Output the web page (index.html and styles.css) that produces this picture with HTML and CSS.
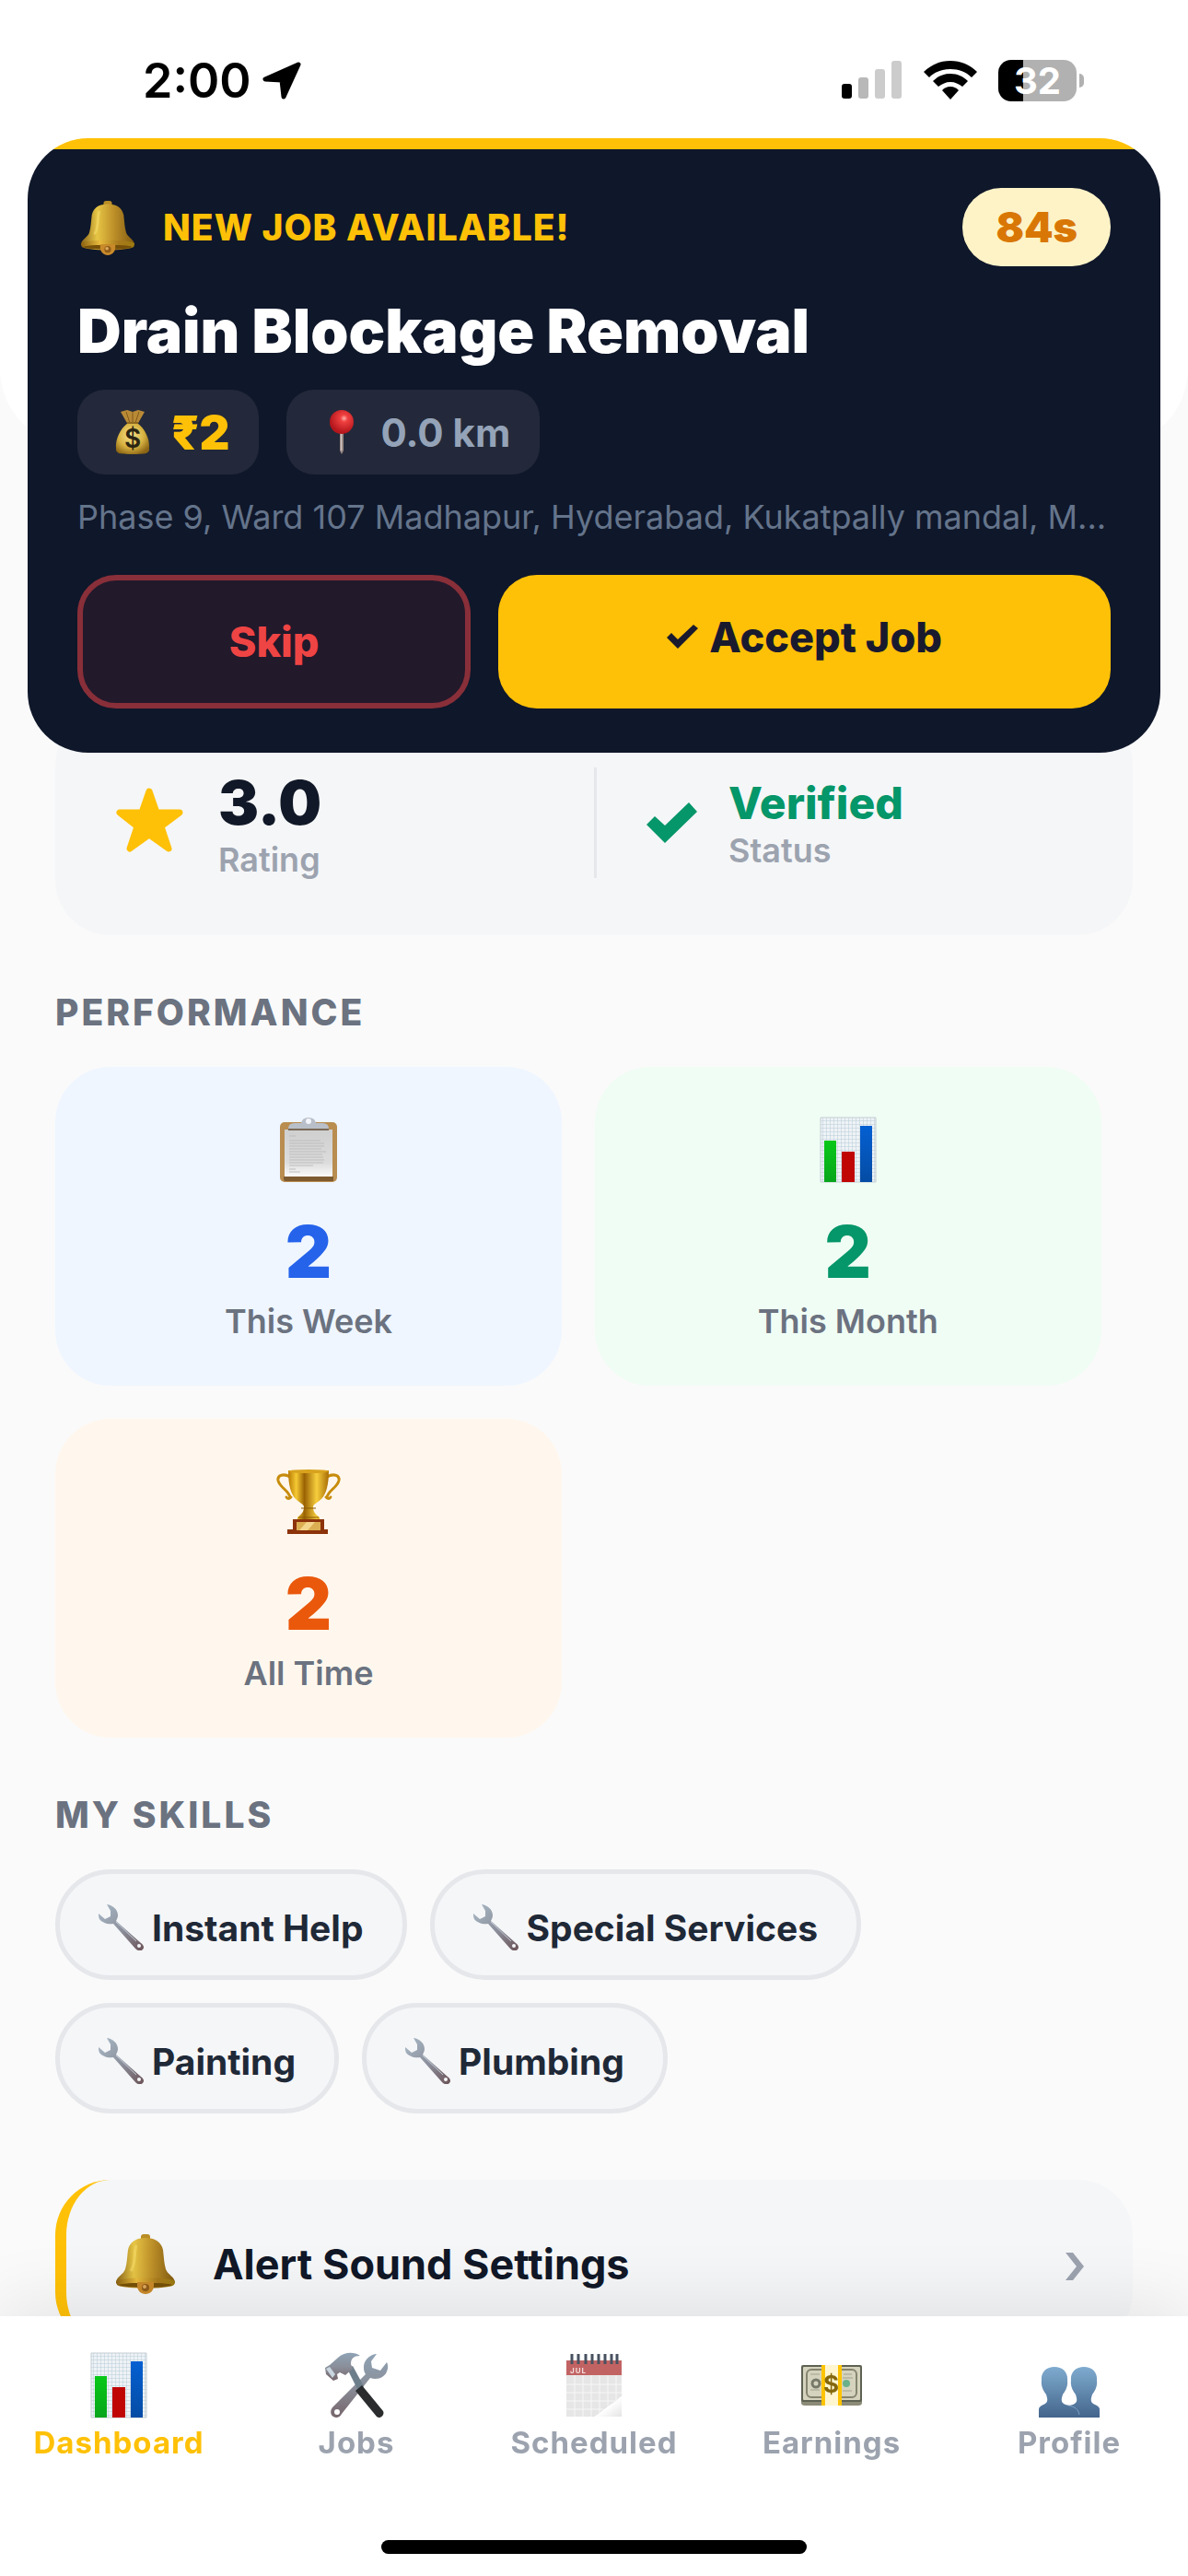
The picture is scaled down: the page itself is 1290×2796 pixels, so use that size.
FILE: index.html
```html
<!DOCTYPE html>
<html lang="en">
<head>
    <meta charset="UTF-8">
    <meta name="viewport" content="width=device-width, initial-scale=1.0">
    <title>Dashboard</title>
    <link rel="stylesheet" href="styles.css">
</head>
<body>
    <!-- Shared icons -->
    <svg class="sprite" aria-hidden="true">
        <defs>
            <linearGradient id="gold" x1="0" x2="1" y1="0" y2="0">
                <stop offset="0" stop-color="#8a6418"/>
                <stop offset=".3" stop-color="#e6c545"/>
                <stop offset=".6" stop-color="#c0922a"/>
                <stop offset="1" stop-color="#80590f"/>
            </linearGradient>
            <linearGradient id="rim" x1="0" x2="1" y1="0" y2="0">
                <stop offset="0" stop-color="#8a6010"/>
                <stop offset=".35" stop-color="#e8bb3d"/>
                <stop offset=".7" stop-color="#a87a1c"/>
                <stop offset="1" stop-color="#9c7a10"/>
            </linearGradient>
            <linearGradient id="cup" x1="0" x2="1" y1="0" y2="0">
                <stop offset="0" stop-color="#b87a04"/>
                <stop offset=".2" stop-color="#f5c933"/>
                <stop offset=".4" stop-color="#9a6203"/>
                <stop offset=".7" stop-color="#f7cf3d"/>
                <stop offset="1" stop-color="#a86c05"/>
            </linearGradient>
            <linearGradient id="steel" x1="0" x2="1" y1="0" y2="1">
                <stop offset="0" stop-color="#a9bac8"/>
                <stop offset=".55" stop-color="#8b8e9a"/>
                <stop offset="1" stop-color="#6b5357"/>
            </linearGradient>
            <linearGradient id="metal" x1="0" x2="0" y1="0" y2="1">
                <stop offset="0" stop-color="#8fa3b5"/>
                <stop offset=".5" stop-color="#8a8f9a"/>
                <stop offset="1" stop-color="#76656b"/>
            </linearGradient>
            <linearGradient id="green" x1="0" x2="0" y1="0" y2="1">
                <stop offset="0" stop-color="#08c818"/>
                <stop offset="1" stop-color="#08a51c"/>
            </linearGradient>
            <linearGradient id="blue" x1="0" x2="0" y1="0" y2="1">
                <stop offset="0" stop-color="#0560d2"/>
                <stop offset="1" stop-color="#044ca4"/>
            </linearGradient>
            <linearGradient id="people" x1="0" x2="0" y1="0" y2="1">
                <stop offset="0" stop-color="#7fabcf"/>
                <stop offset="1" stop-color="#44658c"/>
            </linearGradient>
            <linearGradient id="paper" x1="0" x2="0" y1="0" y2="1">
                <stop offset="0" stop-color="#cfcfcf"/>
                <stop offset=".7" stop-color="#dcdcdc"/>
                <stop offset="1" stop-color="#fafafa"/>
            </linearGradient>
            <linearGradient id="curl" x1="0" x2="1" y1="0" y2="1">
                <stop offset="0" stop-color="#666"/>
                <stop offset=".45" stop-color="#999"/>
                <stop offset=".55" stop-color="#fff"/>
                <stop offset="1" stop-color="#e4e4e4"/>
            </linearGradient>
            <radialGradient id="sack" cx=".45" cy=".4" r=".65">
                <stop offset="0" stop-color="#f8e48c"/>
                <stop offset=".6" stop-color="#d6b03f"/>
                <stop offset="1" stop-color="#8c6615"/>
            </radialGradient>
            <radialGradient id="red" cx=".6" cy=".35" r=".6">
                <stop offset="0" stop-color="#ffb0a8"/>
                <stop offset=".25" stop-color="#f04040"/>
                <stop offset="1" stop-color="#b3161c"/>
            </radialGradient>
            <pattern id="graph" width="4" height="4" patternUnits="userSpaceOnUse">
                <path fill="#eef3f6" d="M0 0h4v4H0z"/>
                <path stroke="#b9cbd8" stroke-width="1" d="M0 0h4M0 0v4"/>
            </pattern>
        </defs>

        <symbol id="icon-bell" viewBox="0 0 66 66">
            <rect x="28" y="1" width="10" height="9" rx="3" fill="#b98d25"/>
            <path fill="url(#gold)" d="M33 5c-10 0-17 4-19 13-1 8-1 14-3 21-2 6-10 8-10 15 3 5 61 5 64 0 0-7-8-9-10-15-2-7-2-13-3-21C50 9 43 5 33 5z"/>
            <path fill="url(#rim)" d="M1 52c6-5 58-5 64 0l-1 4c-7 5-55 5-62 0z"/>
            <path fill="#765008" d="M4 56c6-3 52-3 58 0-7 4-51 4-58 0z"/>
            <path fill="#c98a2a" d="M24 53h18v4c0 5-4 9-9 9s-9-4-9-9z"/>
            <circle cx="33" cy="59" r="4" fill="#8f5c19"/>
            <circle cx="32" cy="58" r="2" fill="#dfa95c"/>
            <path fill="none" stroke="#f5dc6a" stroke-width="3" opacity=".6" d="M23 13c-3 9 0 20-6 28"/>
        </symbol>

        <symbol id="icon-chart" viewBox="0 0 72 72">
            <path fill="url(#graph)" stroke="#c3cdd3" d="M6 1h60v70H6z"/>
            <path fill="url(#green)" d="M10 26h13v45H10z"/>
            <path fill="#c00505" d="M29 38h14v33H29z"/>
            <path fill="url(#blue)" d="M49 10h13v61H49z"/>
        </symbol>

        <symbol id="icon-wrench" viewBox="0 0 50 50">
            <path fill="url(#steel)" d="M9 0c7 1 12 6 12 12 0 2-1 4-2 6l27 24c3 2 4 5 2 7s-5 2-8-1L16 21C10 22 4 20 1 16c-1-2-1-4-1-6l7 6 6-3 0-6z"/>
            <path stroke="#c3ced8" stroke-width="1" d="M19 19l22 21"/>
            <circle cx="44" cy="45" r="2" fill="#f5f6f8"/>
        </symbol>

        <symbol id="icon-clipboard" viewBox="0 0 72 72">
            <rect x="5" y="6" width="62" height="65" rx="5" fill="#b98d50"/>
            <path fill="#7d5a30" d="M9 65h54v5H11q-2 0-2-2z"/>
            <path fill="url(#paper)" d="M10 14h52v51H10z"/>
            <path stroke="#bdbdbd" stroke-width="1" d="M15 21h7M15 26h34M15 29h38M15 32h38M15 35h35M15 38h40M15 41h36M15 44h37M15 47h38M15 50h37M15 53h26M15 57h7M15 60h12"/>
            <path fill="#7b6a58" d="M14 12h44v3H14z"/>
            <path fill="#b9bfc8" d="M14 13q0-6 7-6h7q1-6 8-6t8 6h7q7 0 7 6z"/>
            <circle cx="36" cy="5" r="3" fill="#f3f6fa"/>
        </symbol>

        <symbol id="icon-trophy" viewBox="0 0 72 72">
            <path fill="none" stroke="#c78c0c" stroke-width="3" stroke-linecap="round" d="M16 9C9 5 2 7 3 13c2 8 11 10 13 18M17 31q-3 3-5 0M56 9c7-4 14-2 13 4-2 8-11 10-13 18M55 31q3 3 5 0"/>
            <path fill="url(#cup)" d="M14 2h44c0 16-3 26-8 31-4 4-8 5-9 8 0 6 2 8 7 12v3H24v-3c5-4 7-6 7-12-1-3-5-4-9-8-5-5-8-15-8-31z"/>
            <path stroke="#8a5a06" stroke-width="1" d="M28 43h16M25 53h22"/>
            <ellipse cx="36" cy="3" rx="22" ry="2" fill="#d8a21d"/>
            <path fill="#8c330b" d="M19 55h34v11h4v5H13v-5h6z"/>
            <path fill="#dcae52" d="M23 58h26v9H23z"/>
            <path fill="#f3d68b" d="M34 58h9l-8 9h-9z"/>
        </symbol>
    </svg>

    <!-- Status bar -->
    <header class="header">
        <div class="status-bar">
            <div class="clock">
                <span>2:00</span>
                <svg width="43" height="42" viewBox="0 0 43 42"><path stroke="#000" stroke-width="5" stroke-linejoin="round" d="M39 4 3 20l18 1 2 18z"/></svg>
            </div>
            <div class="status-icons">
                <svg width="66" height="42" viewBox="0 0 66 42">
                    <rect y="25" width="11" height="16" rx="3"/>
                    <rect x="18" y="18" width="11" height="23" rx="3" fill="#b8b8b8"/>
                    <rect x="36" y="9" width="11" height="32" rx="3" fill="#ccc"/>
                    <rect x="54" width="11" height="41" rx="3" fill="#ccc"/>
                </svg>
                <svg width="58" height="42" viewBox="0 0 58 42">
                    <path d="M29 0C18 0 8 4 0 12l6 6c6-6 14-9 23-9s17 3 23 9l6-6C50 4 40 0 29 0z"/>
                    <path d="M29 14c-8 0-14 3-19 8l6 6c4-3 8-5 13-5s9 2 13 5l6-6c-5-5-11-8-19-8z"/>
                    <path d="M29 28c-4 0-7 2-9 4l9 10 9-10c-2-2-5-4-9-4z"/>
                </svg>
                <div class="battery"><span class="battery-level">32</span></div>
            </div>
        </div>
    </header>

    <main class="content">
        <section class="stats">
            <div class="stat">
                <svg width="84" height="78" viewBox="-6 0 84 78"><path fill="#ffc107" stroke="#ffc107" stroke-width="7" stroke-linejoin="round" d="M36 5l8 23h25L49 43l8 24-21-15-21 15 8-24L4 28h24z"/></svg>
                <div>
                    <p class="stat-value">3.0</p>
                    <p class="stat-label">Rating</p>
                </div>
            </div>
            <div class="stat stat-status">
                <svg width="56" height="44" viewBox="0 0 56 44"><path fill="#059669" d="M0 24l9-9 11 10L46 0l9 10-35 34z"/></svg>
                <div>
                    <p class="stat-value verified">Verified</p>
                    <p class="stat-label">Status</p>
                </div>
            </div>
        </section>

        <h2>PERFORMANCE</h2>
        <section class="tiles">
            <div class="tile week">
                <svg class="tile-icon"><use href="#icon-clipboard"/></svg>
                <p class="tile-value">2</p>
                <p class="tile-label">This Week</p>
            </div>
            <div class="tile month">
                <svg class="tile-icon"><use href="#icon-chart"/></svg>
                <p class="tile-value">2</p>
                <p class="tile-label">This Month</p>
            </div>
            <div class="tile all">
                <svg class="tile-icon"><use href="#icon-trophy"/></svg>
                <p class="tile-value">2</p>
                <p class="tile-label">All Time</p>
            </div>
        </section>

        <h2>MY SKILLS</h2>
        <ul class="skills">
            <li><svg class="skill-icon"><use href="#icon-wrench"/></svg>Instant Help</li>
            <li><svg class="skill-icon"><use href="#icon-wrench"/></svg>Special Services</li>
            <li><svg class="skill-icon"><use href="#icon-wrench"/></svg>Painting</li>
            <li><svg class="skill-icon"><use href="#icon-wrench"/></svg>Plumbing</li>
        </ul>

        <button class="setting" type="button">
            <svg class="bell"><use href="#icon-bell"/></svg>
            <span>Alert Sound Settings</span>
            <svg width="20" height="36" viewBox="0 0 20 36"><path fill="#9ca3af" d="M0 6h8l12 15L8 36H0l12-15z"/></svg>
        </button>
    </main>

    <!-- Incoming job alert -->
    <section class="job-alert">
        <div class="job-head">
            <svg class="bell"><use href="#icon-bell"/></svg>
            <span class="job-tag">NEW JOB AVAILABLE!</span>
            <span class="timer">84s</span>
        </div>
        <h1>Drain Blockage Removal</h1>
        <div class="chips">
            <div class="chip">
                <svg width="48" height="50" viewBox="0 0 48 50">
                    <path fill="#b98a36" d="M11 3l7-2 6 2 6-2 7 2-8 14H19z"/>
                    <path stroke="#80591a" stroke-width="1" d="M17 3l4 12M24 3v12M31 3l-4 12"/>
                    <path fill="url(#sack)" d="M19 15h10c8 6 14 17 13 28 0 5-3 6-18 6S6 48 6 43C5 32 11 21 19 15z"/>
                    <path stroke="#8e6820" stroke-width="2" d="M18 15h12"/>
                    <text x="24" y="42" text-anchor="middle" class="coin">$</text>
                </svg>
                <span class="price">₹2</span>
            </div>
            <div class="chip">
                <svg width="48" height="50" viewBox="0 0 48 50">
                    <path fill="#9c8b88" d="M22 25h4v20l-2 4-2-4z"/>
                    <path fill="#d8cdca" d="M23 27h1v18h-1z"/>
                    <circle cx="24" cy="14" r="13" fill="url(#red)"/>
                </svg>
                <span class="distance">0.0 km</span>
            </div>
        </div>
        <p class="address">Phase 9, Ward 107 Madhapur, Hyderabad, Kukatpally mandal, M...</p>
        <div class="job-actions">
            <button class="skip" type="button">Skip</button>
            <button class="accept" type="button">
                <svg width="34" height="26" viewBox="0 0 34 26"><path fill="#1a1a2e" d="M0 14l5-5 7 7L29 0l5 4-22 22z"/></svg>
                Accept Job
            </button>
        </div>
    </section>

    <!-- Bottom navigation -->
    <nav class="tab-bar">
        <div class="tabs">
            <a href="#" class="active">
                <svg class="tab-icon"><use href="#icon-chart"/></svg>
                Dashboard
            </a>
            <a href="#">
                <svg class="tab-icon" viewBox="0 0 72 72">
                    <path fill="url(#metal)" d="M58 2c-6 0-14 6-14 14 0 3 0 5 2 8L10 60c-3 4-2 8 1 10s7 1 9-3l31-39c8 3 16-1 18-7 2-5 1-8 0-10l-7 9-9-3-1-7z"/>
                    <circle cx="15" cy="65" r="3" fill="#fff"/>
                    <path fill="#6e7f8c" d="M26 18l6-3 12 22-6 5z"/>
                    <path fill="#2a2c2e" d="M35 42l7-6 23 28c2 4-3 9-7 6z"/>
                    <path fill="url(#metal)" d="M2 17l5-3 9-8c8-7 18-6 24-2-7 0-10 3-10 9l2 5-8 7-6-3-3 2 1 5-5 2-8-7z"/>
                    <path fill="#c9d6e0" d="M3 18l4-2 6 8-3 4z"/>
                </svg>
                Jobs
            </a>
            <a href="#">
                <svg class="tab-icon" viewBox="0 0 72 72">
                    <path fill="#e6e6e6" d="M6 9h60v39c-7 4-12 14-19 22H6z"/>
                    <path fill="#c26363" d="M6 9h60v16H6z"/>
                    <path stroke="#f7f7f7" stroke-width="1" d="M6 35h60M6 44h60M6 53h54M6 62h46M15 25v45M24 25v45M33 25v45M42 25v45M51 25v40M60 25v27"/>
                    <path fill="url(#curl)" d="M66 46c-6 10-17 12-20 16-2 4-8 7-12 8h32z"/>
                    <path stroke="#485260" stroke-width="3" d="M12 2v11M19 2v11M27 2v11M34 2v11M41 2v11M48 2v11M55 2v11M61 2v11"/>
                    <text x="10" y="23" class="month-name">JUL</text>
                </svg>
                Scheduled
            </a>
            <a href="#">
                <svg class="tab-icon" viewBox="0 0 72 72">
                    <path fill="#8b8b78" d="M3 52h66v3q0 3-4 3H7q-4 0-4-3z"/>
                    <rect x="3" y="14" width="66" height="40" rx="2" fill="#5e6252"/>
                    <rect x="5" y="16" width="62" height="36" rx="1" fill="#d5d3bd"/>
                    <rect x="9" y="19" width="54" height="30" rx="5" fill="none" stroke="#85856f" stroke-width="2"/>
                    <circle cx="19" cy="34" r="4" fill="none" stroke="#77796a" stroke-width="3"/>
                    <circle cx="52" cy="34" r="4" fill="#6ab18b"/>
                    <path stroke="#a1a18b" stroke-width="1" d="M13 24h10M49 24h9M13 41h10M48 42h10M48 28h11"/>
                    <path fill="#ffc400" d="M25 14h22v44H25z"/>
                    <path fill="#fff6cf" d="M29 14h14v44H29z"/>
                    <text x="36" y="44" text-anchor="middle" class="bill">$</text>
                </svg>
                Earnings
            </a>
            <a href="#">
                <svg class="tab-icon" viewBox="0 0 72 72">
                    <path fill="url(#people)" d="M20 16c9 0 15 6 14 15 1 6-2 11-5 15-2 6-2 9 3 11l4 1 4-1c5-2 5-5 3-11-3-4-6-9-5-15-1-9 5-15 14-15s15 6 14 15c1 6-2 11-5 15-2 6-2 9 3 11 3 1 5 3 5 5v9H3v-9c0-2 2-4 5-5 5-2 5-5 3-11-3-4-6-9-5-15-1-9 5-15 14-15z"/>
                    <path fill="none" stroke="#7ca3c4" stroke-width="1" d="M35 58c7 1 11 4 12 10"/>
                </svg>
                Profile
            </a>
        </div>
        <div class="home-indicator"></div>
    </nav>
</body>
</html>
```

FILE: styles.css
```css
* {
    box-sizing: border-box;
}

body {
    margin: 0;
    min-height: 100vh;
    background-color: #fafafa;
    color: #111827;
    font-family: Inter, "Noto Sans", sans-serif;
}

h1, h2, p, ul {
    margin: 0;
    padding: 0;
}

button {
    font-family: inherit;
    cursor: pointer;
}

svg {
    flex-shrink: 0;
}

.sprite {
    position: absolute;
    width: 0;
    height: 0;
}

/* Status bar */
.header {
    height: 484px;
    background-color: #fff;
    border-radius: 0 0 84px 84px;
}

.status-bar {
    display: flex;
    justify-content: space-between;
    padding: 56px 121px 0 155px;
}

.clock,
.status-icons {
    display: flex;
    align-items: center;
    height: 62px;
    color: #000;
}

.clock {
    gap: 12px;
    font-size: 52px;
    font-weight: 600;
}

.status-icons {
    gap: 23px;
}

.battery {
    position: relative;
    width: 85px;
    height: 45px;
    border-radius: 14px;
    background: linear-gradient(to right, #000 27px, #b1b1b1 27px);
    color: #fff;
    font-size: 40px;
    font-weight: 700;
    line-height: 45px;
    text-align: center;
}

.battery::after {
    content: "";
    position: absolute;
    top: 15px;
    right: -8px;
    width: 5px;
    height: 15px;
    border-radius: 0 6px 6px 0;
    background-color: #b1b1b1;
}

/* Dashboard */
.content {
    padding: 287px 60px 240px;
}

.stats {
    display: grid;
    grid-template-columns: 1fr 1fr;
    align-items: center;
    padding: 60px;
    border-radius: 60px;
    background-color: #f5f6f8;
}

.stat {
    display: flex;
    align-items: center;
    gap: 33px;
    height: 124px;
}

.stat-status {
    height: 120px;
    padding-left: 54px;
    border-left: 3px solid #e5e7eb;
}

.stat-value {
    font-size: 66px;
    font-weight: 900;
}

.stat-value.verified {
    color: #059669;
    font-size: 48px;
    font-weight: 800;
}

.stat-label {
    color: #9ca3af;
    font-size: 36px;
    font-weight: 600;
}

h2 {
    margin: 60px 0 36px;
    color: #6b7280;
    font-size: 39px;
    font-weight: 800;
    letter-spacing: 3px;
}

.tiles {
    display: flex;
    flex-wrap: wrap;
    gap: 36px;
}

.tile {
    display: flex;
    flex-direction: column;
    align-items: center;
    width: 47%;
    padding: 54px 48px 48px;
    border-radius: 60px;
}

.tile-icon {
    width: 72px;
    height: 72px;
    margin-bottom: 27px;
}

.tile-value {
    font-size: 78px;
    font-weight: 900;
}

.tile-label {
    margin-top: 6px;
    color: #6b7280;
    font-size: 36px;
    font-weight: 600;
}

.week {
    background-color: #eff6ff;
}

.week .tile-value {
    color: #2563eb;
}

.month {
    background-color: #f0fdf4;
}

.month .tile-value {
    color: #059669;
}

.all {
    background-color: #fff7ed;
}

.all .tile-value {
    color: #ea580c;
}

.skills {
    display: flex;
    flex-wrap: wrap;
    gap: 25px;
    max-width: 1000px;
    list-style: none;
}

.skills li {
    display: flex;
    align-items: center;
    gap: 8px;
    padding: 33px 42px 27px;
    border: 5px solid #e5e7eb;
    border-radius: 60px;
    background-color: #f5f6f8;
    color: #1f2937;
    font-size: 39px;
    font-weight: 700;
}

.skill-icon {
    width: 50px;
    height: 50px;
}

.setting {
    display: flex;
    align-items: center;
    gap: 40px;
    width: 100%;
    margin-top: 72px;
    padding: 58px 53px;
    border: none;
    border-left: 12px solid #ffc107;
    border-radius: 60px;
    background-color: #f5f6f8;
    color: #111827;
    font-size: 45px;
    font-weight: 700;
    text-align: left;
}

.setting span {
    flex: 1;
}

.bell {
    width: 66px;
    height: 66px;
}

/* Job alert, floats over the dashboard */
.job-alert {
    position: fixed;
    top: 150px;
    left: 30px;
    right: 30px;
    padding: 54px 54px 48px;
    border-radius: 66px;
    background: linear-gradient(#ffc107 12px, #0f172a 12px);
}

.job-head {
    display: flex;
    align-items: center;
    gap: 27px;
}

.job-head .bell {
    height: 60px;
}

.job-tag {
    flex: 1;
    color: #ffc107;
    font-size: 39px;
    font-weight: 800;
    letter-spacing: 1px;
}

.timer {
    padding: 15px 36px;
    border-radius: 42px;
    background-color: #fef3c7;
    color: #d97706;
    font-size: 45px;
    font-weight: 900;
}

h1 {
    margin: 30px 0 24px;
    color: #fff;
    font-size: 66px;
    font-weight: 900;
}

.chips {
    display: flex;
    gap: 30px;
}

.chip {
    display: flex;
    align-items: center;
    gap: 18px;
    height: 92px;
    padding: 0 32px 0 36px;
    border-radius: 30px;
    background-color: #23293a;
}

.price {
    color: #ffc107;
    font-size: 51px;
    font-weight: 900;
}

.distance {
    color: #94a3b8;
    font-size: 42px;
    font-weight: 700;
}

.coin {
    fill: #2b2512;
    font-size: 28px;
    font-weight: 600;
}

.address {
    margin: 24px 0 41px;
    overflow: hidden;
    color: #64748b;
    font-size: 36px;
    text-overflow: ellipsis;
    white-space: nowrap;
}

.job-actions {
    display: grid;
    grid-template-columns: 9fr 14fr;
    gap: 30px;
}

.job-actions button {
    height: 145px;
    border-radius: 42px;
    font-size: 45px;
    font-weight: 800;
}

.skip {
    border: 6px solid #892f39;
    background-color: #22192b;
    color: #ef4444;
}

.accept {
    display: flex;
    align-items: center;
    justify-content: center;
    gap: 12px;
    padding-bottom: 12px;
    border: none;
    background-color: #ffc107;
    color: #1a1a2e;
}

/* Bottom navigation */
.tab-bar {
    position: fixed;
    bottom: 0;
    left: 0;
    right: 0;
    padding: 39px 0 24px;
    background-color: #fff;
    box-shadow: 0 -12px 72px rgba(0, 0, 0, 0.09);
}

.tabs {
    display: flex;
}

.tabs a {
    display: flex;
    flex: 1;
    flex-direction: column;
    align-items: center;
    gap: 6px;
    color: #9ca3af;
    font-size: 33px;
    font-weight: 700;
    letter-spacing: 1px;
    text-decoration: none;
}

.tabs a.active {
    color: #ffc107;
}

.tab-icon {
    width: 72px;
    height: 72px;
}

.month-name {
    fill: #f3dede;
    font-size: 8px;
}

.bill {
    fill: #85680c;
    font-size: 26px;
    font-weight: 700;
}

.home-indicator {
    width: 462px;
    height: 15px;
    margin: 86px auto 0;
    border-radius: 8px;
    background-color: #000;
}
```
